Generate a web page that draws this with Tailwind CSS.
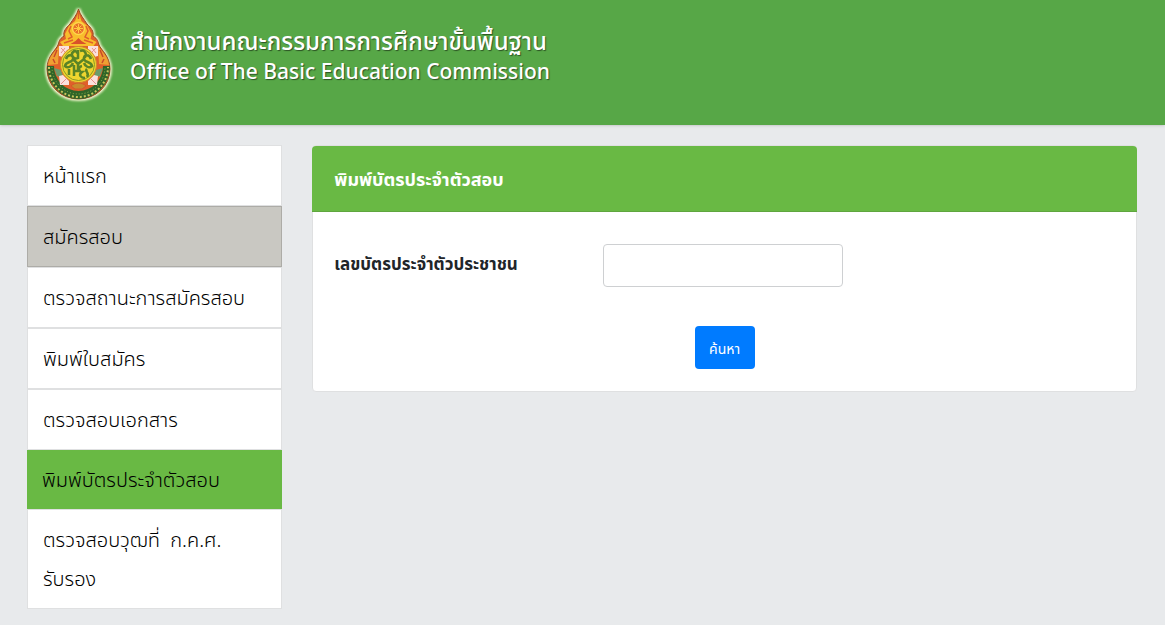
<!DOCTYPE html>
<html lang="th">
<head>
  <meta charset="UTF-8">
  <meta name="viewport" content="width=device-width, initial-scale=1.0">
  <title>พิมพ์บัตรประจำตัวสอบ</title>
  <script src="https://cdn.jsdelivr.net/npm/@tailwindcss/browser@4"></script>
</head>
<body class="min-h-screen bg-[#e8eaec] font-['Noto_Sans_Thai','Noto_Sans',sans-serif] text-[#212529]">
  <header class="flex items-start gap-[14px] bg-[#57a747] pl-10 pt-1 pb-5 shadow-sm">
    <svg class="h-[101px] w-[76px] shrink-0" viewBox="10 4 76 101" role="img" aria-label="OBEC">
      <defs>
        <filter id="glow" x="-20%" y="-20%" width="140%" height="140%"><feGaussianBlur stdDeviation="1"/></filter>
        <path id="body" d="M48.500 9C50 15 54 19 57 24c4 4 7 7 6 12 5 3 5 6 6 9 2 5 11 11 11 24a31.500 30 0 0 1-63 0c0-13 9-19 11-24 1-3 1-6 6-9-1-5 2-8 6-12 3-5 7-9 8.500-15z"/>
      </defs>
      <use href="#body" fill="#fff" stroke="#f7f6d2" stroke-width="4" filter="url(#glow)"/>
      <use href="#body" fill="#e0602a" stroke="#8f4a1c" stroke-width="1"/>
      <!-- orange side flames -->
      <path d="M29 46c-4 6-10 10-11 19l10-1zM68 46c4 6 10 10 11 19l-10-1z" fill="#efa032"/>
      <path d="M27 50l-3 7M70 50l3 7M23 59l2 4M74 59l-2 4" stroke="#c9482a" stroke-width="1.500"/>
      <!-- green base with gold dots -->
      <path d="M17 66a31.500 33 0 0 0 63 0h-7a24.500 25 0 0 1-49 0z" fill="#2f6428"/>
      <path d="M19 67a29.500 30 0 0 0 59 0" fill="none" stroke="#c9c45c" stroke-width="2" stroke-dasharray="2 2"/>
      <path d="M22 67a26.500 27 0 0 0 53 0" fill="none" stroke="#8db04a" stroke-width="1" stroke-dasharray="1 2"/>
      <path d="M24 68l7 2 3 9-7-3zM73 68l-7 2-3 9 7-3z" fill="#6b9c6c"/>
      <!-- crown -->
      <path d="M48.500 12l3 9 6 5 4 8-1 5 6 3-3 4H33l-3-4 6-3-1-5 4-8 6-5z" fill="#f8bd2c"/>
      <path d="M48.500 12v7M41 26l-2 5 3 6-4 2M56 26l2 5-3 6 4 2M34 43l9-3M63 43l-9-3" fill="none" stroke="#e0602a" stroke-width="1.500"/>
      <circle cx="48.500" cy="28.500" r="6" fill="#e8702a" stroke="#ffd64b" stroke-width="1.500"/>
      <path d="M48.500 24v9M44 28.500h9M45.500 25.500l6 6M51.500 25.500l-6 6" stroke="#ffc83f" stroke-width="1"/>
      <path d="M48.500 38l3 3 5 3h-16l5-3z" fill="#d9502a"/>
      <!-- corner flowers -->
      <path d="M29 46h10v5l-6 6-4-1zM58 46h10v10l-4 1-6-6zM29 76l4-1 6 6v4h-9zM68 76l-4-1-6 6v4h9z" fill="#fbe0dc"/>
      <path d="M31 48l5 5M35 48l-4 5M66 48l-5 5M62 48l4 5M31 84l5-5M66 84l-5-5" stroke="#e98f8c" stroke-width="1"/>
      <!-- royal seal -->
      <circle cx="48.500" cy="64.500" r="18" fill="#eed52f" stroke="#d0872a" stroke-width="1"/>
      <circle cx="48.500" cy="64.500" r="16" fill="none" stroke="#8a9a22" stroke-width="1"/>
      <path d="M48 50v8c-4 2-8-3-5-6 2-2 5 0 4 2M50 51c5-2 8 4 4 7M36 59c2-6 8-4 7 0-1 4-7 2-8 7 3 3 7 0 8-3M61 59c-2-6-8-4-7 0 1 4 7 2 8 7-3 3-7 0-8-3M43 59l5 5 6-5M39 69v6M44 65v11M44 71h7M52 66c-5 1-3 6 0 6-4 3-1 6 3 6M57 69c-3 3 3 3 0 8M48 64v8" fill="none" stroke="#5a8426" stroke-width="2.500"/>
      <path d="M41 86c4-4 11-4 15 0l-4 3h-7z" fill="#c98a2c" stroke="#d7562a" stroke-width="1"/>
    </svg>
    <div class="pt-[23px] text-white [text-shadow:1px_1px_1px_rgb(0_0_0/0.5)]">
      <p class="text-2xl leading-8 font-medium">สำนักงานคณะกรรมการการศึกษาขั้นพื้นฐาน</p>
      <p class="text-[21px] leading-7 font-medium">Office of The Basic Education Commission</p>
    </div>
  </header>

  <div class="flex items-start gap-[30px] pt-5 pr-7 pb-4 pl-[27px]">
    <nav class="w-[23%] shrink-0 text-xl leading-[39px] font-light text-black">
      <a href="#" class="block border border-[#dfe0e1] bg-white px-[15px] pt-3 pb-2">หน้าแรก</a>
      <a href="#" class="block border border-[#adaca7] bg-[#c9c8c2] px-[15px] pt-3 pb-2">สมัครสอบ</a>
      <a href="#" class="block border border-[#dfe0e1] bg-white px-[15px] pt-3 pb-2">ตรวจสถานะการสมัครสอบ</a>
      <a href="#" class="block border border-[#dfe0e1] bg-white px-[15px] pt-3 pb-2">พิมพ์ใบสมัคร</a>
      <a href="#" class="block border border-[#dfe0e1] bg-white px-[15px] pt-3 pb-2">ตรวจสอบเอกสาร</a>
      <a href="#" class="block bg-[#69b944] px-[15px] pt-3 pb-2">พิมพ์บัตรประจำตัวสอบ</a>
      <a href="#" class="block border border-[#dfe0e1] bg-white px-[15px] pt-3 pb-2">ตรวจสอบวุฒที่&nbsp; ก.ค.ศ.<br>รับรอง</a>
    </nav>

    <main class="min-w-0 flex-1 rounded border border-[#dfe0e1] bg-white">
      <h1 class="-mx-px rounded-t border-b border-[#5fa63e] bg-[#69b944] px-[22px] pt-5 pb-4 text-lg leading-[29px] font-bold text-white">พิมพ์บัตรประจำตัวสอบ</h1>
      <form class="px-[21px] pt-8 pb-[22px]">
        <div class="grid grid-cols-[269px_minmax(0,240px)] items-center">
          <label for="citizenId" class="text-[17px] font-bold">เลขบัตรประจำตัวประชาชน</label>
          <input id="citizenId" type="text" class="h-[43px] w-full rounded border border-[#ced0d2] bg-white px-3">
        </div>
        <div class="mt-[39px] flex justify-center">
          <button type="button" class="h-[43px] w-[60px] rounded bg-[#007bff] pt-1 text-sm text-white">ค้นหา</button>
        </div>
      </form>
    </main>
  </div>
</body>
</html>
